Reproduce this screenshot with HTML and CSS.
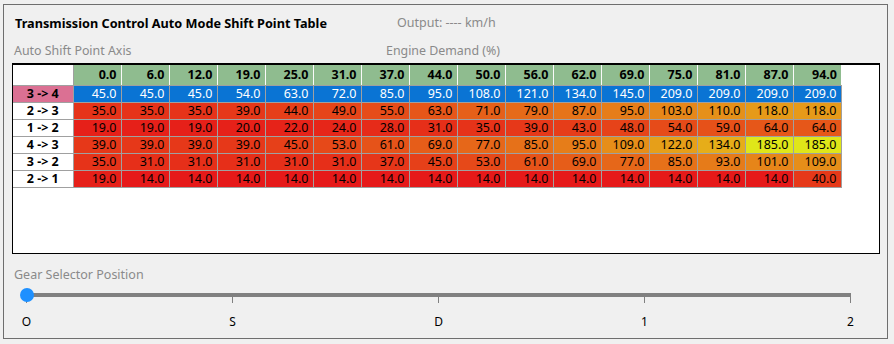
FILE: index.html
```html
<!DOCTYPE html>
<html>
<head>
<meta charset="utf-8">
<link rel="stylesheet" href="styles.css">
</head>
<body>
<div class="panel">
  <div class="top">
    <div class="title">Transmission Control Auto Mode Shift Point Table</div>
    <div class="output">Output: ---- km/h</div>
  </div>
  <div class="axes">
    <div class="axis-y">Auto Shift Point Axis</div>
    <div class="axis-x">Engine Demand (%)</div>
  </div>
  <div class="tablebox">
    <table class="grid" id="grid"></table>
  </div>
  <div class="slider">
    <div class="slider-label">Gear Selector Position</div>
    <div class="track-wrap">
      <div class="track"></div>
      <div class="thumb"></div>
      <div class="ticks"><span></span><span></span><span></span><span></span><span></span></div>
      <div class="tick-labels"><span>O</span><span>S</span><span>D</span><span>1</span><span>2</span></div>
    </div>
  </div>
</div>
<script src="script.js"></script>
</body>
</html>
```
FILE: script.js
```js
var headers = ["0.0","6.0","12.0","19.0","25.0","31.0","37.0","44.0","50.0","56.0","62.0","69.0","75.0","81.0","87.0","94.0"];
var rows = [
  ["3 -> 4", [45,45,45,54,63,72,85,95,108,121,134,145,209,209,209,209], true],
  ["2 -> 3", [35,35,35,39,44,49,55,63,71,79,87,95,103,110,118,118]],
  ["1 -> 2", [19,19,19,20,22,24,28,31,35,39,43,48,54,59,64,64]],
  ["4 -> 3", [39,39,39,39,45,53,61,69,77,85,95,109,122,134,185,185]],
  ["3 -> 2", [35,31,31,31,31,31,37,45,53,61,69,77,85,93,101,109]],
  ["2 -> 1", [19,14,14,14,14,14,14,14,14,14,14,14,14,14,14,40]]
];
var t = document.getElementById("grid");
var h = "<colgroup><col class='c-lbl'>";
headers.forEach(function () { h += "<col class='c-val'>"; });
h += "</colgroup><tr class='head'><th class='corner'></th>";
headers.forEach(function (x) { h += "<th>" + x + "</th>"; });
h += "</tr>";
rows.forEach(function (r) {
  h += "<tr" + (r[2] ? " class='active'" : "") + "><td class='lbl'>" + r[0] + "</td>";
  r[1].forEach(function (v) {
    if (r[2]) {
      h += "<td>" + v.toFixed(1) + "</td>";
    } else {
      var hue = Math.max(0, Math.min(62, (v - 14) / 171 * 62));
      h += "<td style='background:hsl(" + hue.toFixed(1) + ",80%,50%)'>" + v.toFixed(1) + "</td>";
    }
  });
  h += "</tr>";
});
t.innerHTML = h;
```
FILE: styles.css
```css
html, body {
  margin: 0;
  padding: 0;
  background: #f0f0f0;
}
body {
  font-family: "Noto Sans", "Open Sans", sans-serif;
  font-size: 12px;
  color: #000;
  width: 894px;
  height: 344px;
  overflow: hidden;
}
.panel {
  margin: 4px 0 0 3px;
  width: 883px;
  height: 333px;
  border: 1px solid #6e6e6e;
  box-sizing: content-box;
  display: flex;
  flex-direction: column;
}
.top {
  display: flex;
  align-items: center;
  height: 17px;
  margin-top: 9px;
  padding-left: 11px;
}
.title {
  font-weight: bold;
  width: 382px;
  font-size: 12.7px;
}
.output {
  color: #8a8a8a;
  font-size: 12.5px;
}
.axes {
  display: flex;
  align-items: center;
  height: 17px;
  margin-top: 11px;
  padding-left: 10px;
  color: #8a8a8a;
  font-size: 12.4px;
}
.axis-y {
  width: 372px;
}
.tablebox {
  margin: 4px 0 0 8px;
  width: 866px;
  height: 188px;
  background: #fff;
  border: 1px solid #000;
  border-top-width: 2px;
  box-sizing: content-box;
}
.grid {
  border-collapse: collapse;
  table-layout: fixed;
  width: 828px;
  margin: 0;
  font-size: 12.5px;
}
.c-lbl {
  width: 60px;
}
.c-val {
  width: 48px;
}
.grid th, .grid td {
  padding: 0 4px 0 0;
  text-align: right;
  white-space: nowrap;
  line-height: 14px;
  overflow: hidden;
}
.grid th {
  height: 20px;
  background: #8fbc8f;
  font-weight: bold;
  border-left: 1px solid #fafafa;
  border-bottom: 1px solid #a0a0a0;
}
.grid th.corner {
  background: #fff;
  border-left: none;
  border-right: 1px solid #a0a0a0;
}
.grid td {
  height: 16px;
  border: 1px solid #a0a0a0;
}
.grid td.lbl {
  background: #fff;
  text-align: center;
  padding: 0;
  font-weight: bold;
  border-left: none;
}
.grid tr.active td {
  background: #0a74d4;
  color: #fff;
}
.grid tr.active td.lbl {
  background: #db7093;
  color: #000;
}
.slider {
  padding-left: 10px;
  margin-top: 12px;
}
.slider-label {
  color: #8a8a8a;
  height: 17px;
  line-height: 17px;
  font-size: 12.5px;
}
.track-wrap {
  position: relative;
  margin-left: 12px;
  margin-top: 10px;
  width: 825px;
}
.track {
  height: 4px;
  background: #808080;
}
.thumb {
  position: absolute;
  left: -6px;
  top: -5px;
  width: 14px;
  height: 14px;
  border-radius: 50%;
  background: #1e90ff;
}
.ticks {
  display: flex;
  justify-content: space-between;
  height: 6px;
}
.ticks span {
  width: 1px;
  height: 6px;
  background: #808080;
}
.tick-labels {
  display: flex;
  justify-content: space-between;
  margin-top: 11px;
  height: 16px;
  line-height: 16px;
}
.tick-labels span {
  width: 1px;
  display: flex;
  justify-content: center;
}
```
